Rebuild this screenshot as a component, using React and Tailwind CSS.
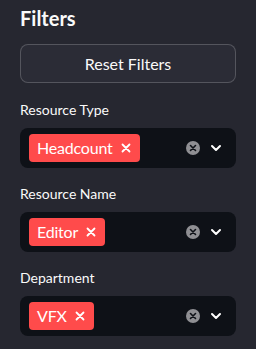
import React from "react";

function Tag({ label }) {
  return (
    <div className="flex h-[28px] items-center rounded-[4px] bg-[#ff4b4b] pl-[8px] pr-[9px] text-[16px] text-white">
      <span className="tracking-[-0.2px]">{label}</span>
      <svg className="ml-[8px]" width="10" height="10" viewBox="0 0 10 10">
        <path d="M1.5 1.5 L8.5 8.5 M8.5 1.5 L1.5 8.5" stroke="white" strokeWidth="1.8" strokeLinecap="round" />
      </svg>
    </div>
  );
}

function Select({ label, value }) {
  return (
    <div className="flex flex-col">
      <div className="h-[20px] text-[14px] leading-[20px] text-[#fafafa]">{label}</div>
      <div className="mt-[8px] flex h-[40px] items-center rounded-[8px] bg-[#0e1117] pl-[9px] pr-[14px]">
        <Tag label={value} />
        <div className="flex-1" />
        <svg width="14" height="14" viewBox="0 0 14 14">
          <circle cx="7" cy="7" r="7" fill="#8f8f93" />
          <path d="M4.5 4.5 L9.5 9.5 M9.5 4.5 L4.5 9.5" stroke="#0e1117" strokeWidth="1.6" strokeLinecap="round" />
        </svg>
        <svg className="ml-[10px]" width="12" height="12" viewBox="0 0 12 12">
          <path d="M2 4 L6 8 L10 4" fill="none" stroke="white" strokeWidth="2" strokeLinecap="round" strokeLinejoin="round" />
        </svg>
      </div>
    </div>
  );
}

export default function App() {
  return (
    <div
      className="flex h-[349px] w-[256px] flex-col bg-[#262730] px-[20px] text-[#fafafa]"
      style={{ fontFamily: '"Source Sans Pro", Lato, "Noto Sans", sans-serif' }}
    >
      <div className="mt-[4px] text-[20px] font-bold leading-[28px]">Filters</div>
      <button className="mt-[12px] flex h-[39px] items-center justify-center rounded-[8px] border border-[rgba(250,250,250,0.2)] bg-[#2b2c36] text-[16px] text-[#fafafa]">
        Reset Filters
      </button>
      <div className="mt-[17px] flex flex-col gap-[16px]">
        <Select label="Resource Type" value="Headcount" />
        <Select label="Resource Name" value="Editor" />
        <Select label="Department" value="VFX" />
      </div>
    </div>
  );
}
